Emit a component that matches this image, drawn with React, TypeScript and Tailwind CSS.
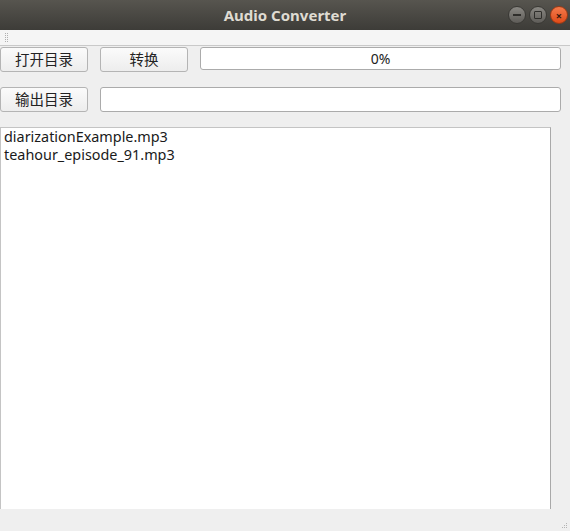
import React from 'react'

const files = ['diarizationExample.mp3', 'teahour_episode_91.mp3']

const Btn = ({ label }: { label: string }) => (
  <button className="w-[88px] h-[25px] rounded-[3px] border border-[#b4b4b4] bg-gradient-to-b from-[#fbfbfb] to-[#ededed] text-[14.5px] text-[#222] leading-none">
    {label}
  </button>
)

const App = () => {
  return (
    <div className="w-[570px] h-[531px] flex flex-col bg-[#efefef] overflow-hidden" style={{ fontFamily: '"Noto Sans", "Noto Sans CJK SC", sans-serif' }}>
      {/* title bar */}
      <div className="h-[30px] flex items-center relative bg-gradient-to-b from-[#57554f] to-[#3d3c38]">
        <div className="flex-1 text-center text-[15px] font-bold text-[#dfdbd2]">Audio Converter</div>
        <div className="absolute right-[2px] top-[6px] flex gap-[3px]">
          <div className="w-[18px] h-[18px] rounded-full bg-gradient-to-b from-[#8a8883] to-[#5e5c58] border border-[#3a3935] flex items-center justify-center">
            <div className="w-[8px] h-[1.5px] bg-[#2f2e2b]" />
          </div>
          <div className="w-[18px] h-[18px] rounded-full bg-gradient-to-b from-[#8a8883] to-[#5e5c58] border border-[#3a3935] flex items-center justify-center">
            <div className="w-[8px] h-[8px] border border-[#2f2e2b] rounded-[1px]" />
          </div>
          <div className="w-[18px] h-[18px] rounded-full bg-gradient-to-b from-[#f47a4a] to-[#df4a16] border border-[#9b3a15] flex items-center justify-center text-[#3a1a0c] text-[11px] leading-none font-bold">
            ×
          </div>
        </div>
      </div>
      {/* toolbar strip */}
      <div className="h-[16px] bg-[#f5f5f5] border-b border-[#c9c9c9] flex items-center pl-[5px]">
        <div className="grid grid-cols-2 gap-x-[1px] gap-y-[1px]">
          {Array.from({ length: 10 }).map((_, i) => (
            <div key={i} className="w-[1px] h-[1px] bg-[#b0b0b0]" />
          ))}
        </div>
      </div>
      {/* controls */}
      <div className="flex items-center gap-[12px] mt-[1px]">
        <Btn label="打开目录" />
        <Btn label="转换" />
        <div className="w-[361px] h-[23px] mb-[2px] rounded-[3px] border border-[#ababab] bg-white flex items-center justify-center text-[14px] text-[#222]">
          0%
        </div>
      </div>
      <div className="flex items-center gap-[12px] mt-[15px]">
        <Btn label="输出目录" />
        <div className="w-[461px] h-[25px] rounded-[3px] border border-[#ababab] bg-white" />
      </div>
      <div className="w-[551px] h-[382px] mt-[15px] bg-white border border-[#c4c4c4] border-r-[#a9a9a9] border-b-0 pl-[3px] text-[14.4px] leading-[18px] text-[#1a1a1a]">
        {files.map((f) => (
          <div key={f}>{f}</div>
        ))}
      </div>
      <div className="flex-1 relative">
        <div className="absolute right-[3px] bottom-[3px] grid grid-cols-4 gap-[1px]">
          {[0, 0, 0, 1, 0, 0, 1, 1, 0, 1, 1, 1].map((v, i) => (
            <div key={i} className={v ? 'w-[1px] h-[1px] bg-[#b4b4b4]' : 'w-[1px] h-[1px]'} />
          ))}
        </div>
      </div>
    </div>
  )
}

export default App
